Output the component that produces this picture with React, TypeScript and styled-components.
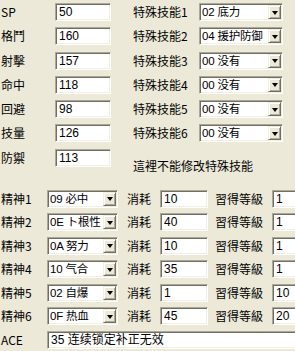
import { createGlobalStyle } from "styled-components";
import styled from "styled-components";

const GlobalStyle = createGlobalStyle`
  html, body {
    margin: 0;
    padding: 0;
    background: #ece9d8;
  }
  body {
    font-family: "Liberation Sans", "Noto Sans CJK SC", sans-serif;
    font-size: 12px;
    color: #000;
  }
`;

const stats = [
  { label: "SP", value: "50" },
  { label: "格鬥", value: "160" },
  { label: "射擊", value: "157" },
  { label: "命中", value: "118" },
  { label: "回避", value: "98" },
  { label: "技量", value: "126" },
  { label: "防禦", value: "113" },
];

const skills = ["02 底力", "04 援护防御", "00 没有", "00 没有", "00 没有", "00 没有"];

const spirits = [
  { pick: "09 必中", cost: "10", level: "1" },
  { pick: "0E ト根性", cost: "40", level: "1" },
  { pick: "0A 努力", cost: "10", level: "1" },
  { pick: "10 气合", cost: "35", level: "1" },
  { pick: "02 自爆", cost: "1", level: "10" },
  { pick: "0F 热血", cost: "45", level: "20" },
];

export default function App() {
  return (
    <>
      <GlobalStyle />
      <Page>
        <StatGrid>
          {stats.map((s, i) => (
            <StatRow key={s.label}>
              <Label>{s.label}</Label>
              <Field>{s.value}</Field>
              <span />
              {i < 6 ? (
                <>
                  <Label>特殊技能{i + 1}</Label>
                  <Combo text={skills[i]} />
                </>
              ) : (
                <Note>這裡不能修改特殊技能</Note>
              )}
            </StatRow>
          ))}
        </StatGrid>

        <SpiritGrid>
          {spirits.map((s, i) => (
            <SpiritRow key={i}>
              <Label>精神{i + 1}</Label>
              <Combo text={s.pick} />
              <span />
              <Label>消耗</Label>
              <Field>{s.cost}</Field>
              <span />
              <Label>習得等級</Label>
              <Field>{s.level}</Field>
            </SpiritRow>
          ))}
          <SpiritRow>
            <Label>ACE</Label>
            <WideField>35 连续锁定补正无效</WideField>
          </SpiritRow>
        </SpiritGrid>
      </Page>
    </>
  );
}

function Combo({ text }: { text: string }) {
  return (
    <ComboBox>
      <ComboText>{text}</ComboText>
      <DropButton>
        <Arrow />
      </DropButton>
    </ComboBox>
  );
}

const Page = styled.div`
  width: 295px;
  height: 351px;
  overflow: hidden;
  padding-left: 1px;
  box-sizing: border-box;
`;

const StatGrid = styled.div`
  display: grid;
  row-gap: 6.3px;
  padding-top: 3px;
`;

const StatRow = styled.div`
  display: grid;
  grid-template-columns: 54px 56px 22px 66px 84px;
  height: 18px;
  align-items: center;
`;

const SpiritGrid = styled.div`
  display: grid;
  row-gap: 5.5px;
  margin-top: 23px;
`;

const SpiritRow = styled.div`
  display: grid;
  grid-template-columns: 46px 71px 9px 33px 48px 7px 57px 60px;
  height: 18px;
  align-items: center;
`;

const Label = styled.span`
  font-family: "Noto Sans CJK SC", "Liberation Sans", sans-serif;
  font-size: 12px;
  line-height: 18px;
  white-space: nowrap;
`;

const Note = styled.span`
  grid-column: 4 / 6;
  align-self: end;
  margin-bottom: -7px;
  font-family: "Noto Sans CJK SC", sans-serif;
  font-size: 12px;
  white-space: nowrap;
`;

const sunken = `
  box-sizing: border-box;
  height: 18px;
  background: #fff;
  border: 1px solid;
  border-color: #aca899 #fff #fff #aca899;
  box-shadow: inset 1px 1px 0 #716f64, inset -1px -1px 0 #f1efe2;
`;

const Field = styled.div`
  ${sunken}
  padding: 0 3px;
  font-family: "Liberation Sans", "Noto Sans CJK SC", sans-serif;
  font-size: 12px;
  line-height: 16px;
  white-space: nowrap;
  overflow: hidden;
`;

const WideField = styled(Field)`
  grid-column: 2 / 9;
  width: 260px;
`;

const ComboBox = styled.div`
  ${sunken}
  display: flex;
  align-items: stretch;
  padding: 1px;
`;

const ComboText = styled.span`
  flex: 1;
  min-width: 0;
  padding-left: 1px;
  font-family: "Liberation Sans", "Noto Sans CJK SC", sans-serif;
  font-size: 11.5px;
  letter-spacing: -0.2px;
  line-height: 14px;
  white-space: nowrap;
  overflow: hidden;
`;

const DropButton = styled.span`
  flex: none;
  box-sizing: border-box;
  width: 13px;
  background: #ece9d8;
  border: 1px solid;
  border-color: #f1efe2 #716f64 #716f64 #f1efe2;
  box-shadow: inset 1px 1px 0 #fff, inset -1px -1px 0 #aca899;
  display: flex;
  align-items: center;
  justify-content: center;
`;

const Arrow = styled.span`
  width: 0;
  height: 0;
  border-left: 3.5px solid transparent;
  border-right: 3.5px solid transparent;
  border-top: 4px solid #000;
  margin-top: 1px;
`;
